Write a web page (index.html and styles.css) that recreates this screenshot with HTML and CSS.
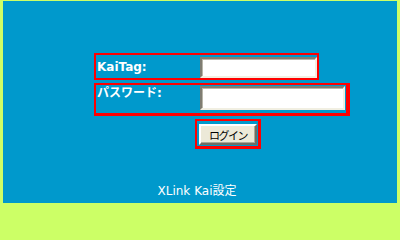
FILE: index.html
```html
<!DOCTYPE html>
<html lang="ja">
<head>
<meta charset="utf-8">
<title>XLink Kai設定</title>
<link rel="stylesheet" href="styles.css">
</head>
<body>
<div class="page">
  <form class="login">
    <div class="row row-tag">
      <span class="label">KaiTag:</span>
      <input class="field field-tag" type="text">
    </div>
    <div class="row row-pass">
      <span class="label label-jp">パスワード:</span>
      <input class="field field-pass" type="password">
    </div>
    <div class="submit-box">
      <button class="btn" type="button">ログイン</button>
    </div>
  </form>
  <p class="footer">XLink Kai設定</p>
</div>
</body>
</html>
```
FILE: styles.css
```css
html {
  background: #ccff66;
}
body {
  margin: 0;
  padding: 1px 3px 3px 3px;
  font-family: "DejaVu Sans", "Noto Sans CJK JP", sans-serif;
  font-size: 12px;
  line-height: 14px;
}
.page {
  background: #0099cc;
  height: 202px;
  box-sizing: border-box;
  padding-top: 52px;
  overflow: hidden;
}
.login {
  margin: 0 0 0 91px;
  display: flex;
  flex-direction: column;
  align-items: flex-start;
  gap: 3px;
}
.row {
  display: flex;
  align-items: flex-start;
  border: 2px solid #ff0000;
}
.row-tag {
  padding: 2px 0 0 1px;
}
.row-pass {
  padding: 1px 1px 3px 1px;
  border-right-width: 4px;
  border-bottom-width: 3px;
}
.label {
  width: 103px;
  color: #ffffff;
  font-weight: bold;
  margin-top: 3px;
}
.label-jp {
  margin-top: 0;
}
.field {
  box-sizing: border-box;
  margin: 0;
  padding: 0 2px;
  background: #ffffff;
  border-style: solid;
  border-width: 2px;
  border-color: #7f7d72 #f1efe2 #f1efe2 #7f7d72;
  box-shadow: inset 1px 1px 0 #b8b6aa;
  outline: none;
  font: inherit;
}
.field-tag {
  width: 117px;
  height: 21px;
}
.field-pass {
  width: 145px;
  height: 24px;
}
.submit-box {
  margin-left: 101px;
  border: 2px solid #ff0000;
  border-right-width: 3px;
  border-bottom-width: 3px;
  padding: 3px 1px 1px 2px;
  display: flex;
}
.btn {
  box-sizing: border-box;
  width: 58px;
  height: 21px;
  margin: 0;
  padding: 0;
  background: #ece9d8;
  border-style: solid;
  border-width: 2px;
  border-color: #ffffff #716f64 #716f64 #ffffff;
  box-shadow: inset -1px -1px 0 #aca899;
  color: #000000;
  font-family: "Noto Sans CJK JP", sans-serif;
  font-size: 11px;
  letter-spacing: -1.5px;
  line-height: 14px;
}
.footer {
  margin: 35px 6px 0 0;
  text-align: center;
  color: #ffffff;
}
```
